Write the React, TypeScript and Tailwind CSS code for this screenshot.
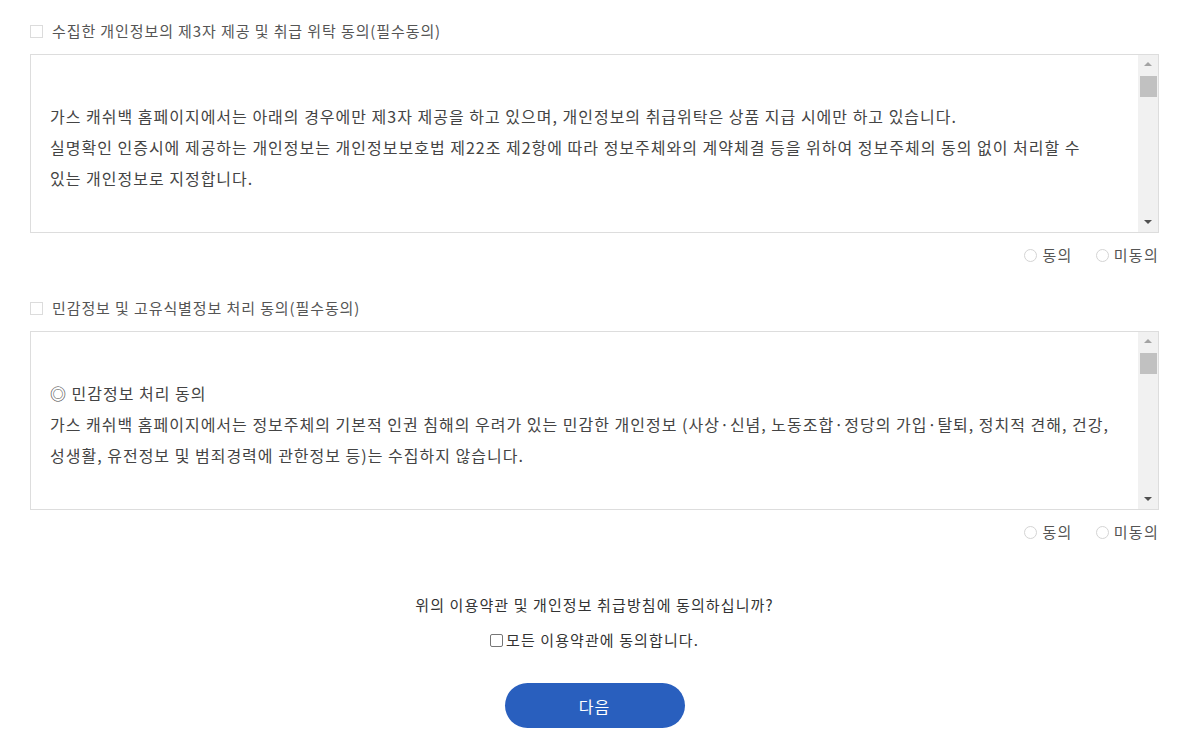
import React from "react";

const FONT = { fontFamily: '"Noto Sans CJK KR", "Noto Sans", sans-serif' };

function Scrollbar() {
  return (
    <div className="w-[20px] shrink-0 bg-[#f1f1f1] relative">
      <div className="flex justify-center pt-[7px]">
        <div className="w-0 h-0 border-l-[4px] border-r-[4px] border-b-[4px] border-l-transparent border-r-transparent border-b-[#a3a3a3]" />
      </div>
      <div className="ml-[2px] mt-[10px] w-[17px] h-[21px] bg-[#c1c1c1]" />
      <div className="absolute bottom-[8px] left-0 right-0 flex justify-center">
        <div className="w-0 h-0 border-l-[4px] border-r-[4px] border-t-[4px] border-l-transparent border-r-transparent border-t-[#505050]" />
      </div>
    </div>
  );
}

function TermsBox({ lines }: { lines: string[] }) {
  return (
    <div className="mt-[10px] h-[179px] border border-[#dddddd] flex bg-white">
      <div className="flex-1 overflow-hidden pl-[19px] pr-[20px] pt-[15px] text-[16px] leading-[31px] tracking-[1px] text-[#444444]">
        {lines.map((l, i) => (
          <div key={i} className="whitespace-nowrap h-[31px]">
            {l || "\u00a0"}
          </div>
        ))}
      </div>
      <Scrollbar />
    </div>
  );
}

function Radio({ label }: { label: string }) {
  return (
    <label className="flex items-center gap-[5px]">
      <span className="w-[13px] h-[13px] rounded-full border border-[#d4d4d4] bg-white" />
      <span>{label}</span>
    </label>
  );
}

function Section({ title, lines }: { title: string; lines: string[] }) {
  return (
    <div>
      <div className="h-[26px] flex items-center gap-[9px] text-[15px] tracking-[0.9px] text-[#555555]">
        <span className="w-[13px] h-[13px] border border-[#dcdcdc] bg-white" />
        <span>{title}</span>
      </div>
      <TermsBox lines={lines} />
      <div className="h-[24px] mt-[10px] flex justify-end items-center gap-[23px] text-[15px] tracking-[1.3px] text-[#555555]">
        <Radio label="동의" />
        <Radio label="미동의" />
      </div>
    </div>
  );
}

export default function App() {
  return (
    <div className="bg-white min-h-[754px] px-[30px] pt-[18px]" style={FONT}>
      <Section
        title="수집한 개인정보의 제3자 제공 및 취급 위탁 동의(필수동의)"
        lines={[
          "",
          "가스 캐쉬백 홈페이지에서는 아래의 경우에만 제3자 제공을 하고 있으며, 개인정보의 취급위탁은 상품 지급 시에만 하고 있습니다.",
          "실명확인 인증시에 제공하는 개인정보는 개인정보보호법 제22조 제2항에 따라 정보주체와의 계약체결 등을 위하여 정보주체의 동의 없이 처리할 수",
          "있는 개인정보로 지정합니다.",
          "",
          " - 가스 캐쉬백 홈페이지 회원 서비스 제공을 위해 개인정보를 제공하는 경우 : 아래에 명시하는 사항들을 위해 사용되며 가스 캐쉬백에",
        ]}
      />
      <div className="mt-[28px]">
        <Section
          title="민감정보 및 고유식별정보 처리 동의(필수동의)"
          lines={[
            "",
            "◎ 민감정보 처리 동의",
            "가스 캐쉬백 홈페이지에서는 정보주체의 기본적 인권 침해의 우려가 있는 민감한 개인정보 (사상·신념, 노동조합·정당의 가입·탈퇴, 정치적 견해, 건강,",
            "성생활, 유전정보 및 범죄경력에 관한정보 등)는 수집하지 않습니다.",
            "",
            "◎ 고유식별정보 처리 동의 가스 캐쉬백 홈페이지에서는 아래와 같은 고유식별정보 처리(수집·이용 및 제3자 제공)를 하고 있으며",
          ]}
        />
      </div>
      <div className="mt-[50px] flex flex-col items-center text-[15px] tracking-[1.1px] text-[#333333]">
        <div className="h-[22px] leading-[22px]">위의 이용약관 및 개인정보 취급방침에 동의하십니까?</div>
        <label className="mt-[13px] h-[22px] flex items-center gap-[3px]">
          <span className="w-[13px] h-[13px] rounded-[2px] border border-[#767676] bg-white" />
          <span>모든 이용약관에 동의합니다.</span>
        </label>
        <button className="mt-[32px] w-[180px] h-[45px] rounded-full bg-[#295fbe] text-white text-[16px] tracking-[1px]">
          다음
        </button>
      </div>
    </div>
  );
}
